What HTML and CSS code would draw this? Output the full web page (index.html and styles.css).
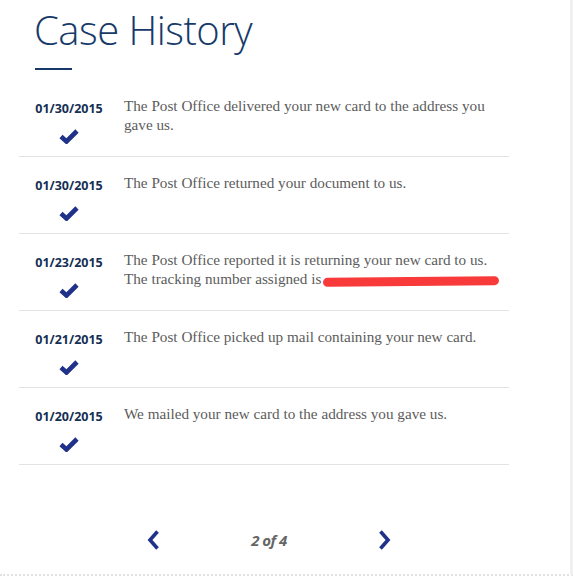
FILE: index.html
```html
<!DOCTYPE html>
<html>
<head>
<meta charset="utf-8">
<link rel="stylesheet" href="styles.css">
</head>
<body>
<div class="page">
  <div class="content">
    <h1 class="title">Case History</h1>
    <div class="rule"></div>
    <ul class="history">
      <li class="item">
        <div class="when"><span class="date">01/30/2015</span>
          <svg class="check" viewBox="0 0 20 16" width="20" height="16"><path d="M2 8.5 L7.5 13.5 L18 3" /></svg></div>
        <p class="desc">The Post Office delivered your new card to the address you gave us.</p>
      </li>
      <li class="item">
        <div class="when"><span class="date">01/30/2015</span>
          <svg class="check" viewBox="0 0 20 16" width="20" height="16"><path d="M2 8.5 L7.5 13.5 L18 3" /></svg></div>
        <p class="desc">The Post Office returned your document to us.</p>
      </li>
      <li class="item">
        <div class="when"><span class="date">01/23/2015</span>
          <svg class="check" viewBox="0 0 20 16" width="20" height="16"><path d="M2 8.5 L7.5 13.5 L18 3" /></svg></div>
        <p class="desc">The Post Office reported it is returning your new card to us. The tracking number assigned is<span class="redact"></span></p>
      </li>
      <li class="item">
        <div class="when"><span class="date">01/21/2015</span>
          <svg class="check" viewBox="0 0 20 16" width="20" height="16"><path d="M2 8.5 L7.5 13.5 L18 3" /></svg></div>
        <p class="desc">The Post Office picked up mail containing your new card.</p>
      </li>
      <li class="item">
        <div class="when"><span class="date">01/20/2015</span>
          <svg class="check" viewBox="0 0 20 16" width="20" height="16"><path d="M2 8.5 L7.5 13.5 L18 3" /></svg></div>
        <p class="desc">We mailed your new card to the address you gave us.</p>
      </li>
    </ul>
    <nav class="pager">
      <svg class="chev" viewBox="0 0 14 22" width="14" height="22"><path d="M11.5 2.5 L4 11 L11.5 19.5" /></svg>
      <span class="count">2 of 4</span>
      <svg class="chev" viewBox="0 0 14 22" width="14" height="22"><path d="M2.5 2.5 L10 11 L2.5 19.5" /></svg>
    </nav>
  </div>
</div>
</body>
</html>
```
FILE: styles.css
```css
html, body { margin: 0; padding: 0; background: #fff; }
.page {
  width: 570px;
  height: 574px;
  border-right: 3px solid #f0f0f0;
  border-bottom: 2px dotted #e2e2e2;
  background: #fff;
}
.content { padding: 5px 0 0 19px; width: 490px; }
.title {
  margin: 0 0 0 15px;
  font-family: "Open Sans", sans-serif;
  font-weight: 300;
  font-size: 40px;
  line-height: 50px;
  color: #173a6a;
  letter-spacing: -0.5px;
}
.rule { margin: 13px 0 0 16px; width: 37px; height: 2px; background: #173a6a; }
.history { list-style: none; margin: 10px 0 0; padding: 0; }
.item {
  display: flex;
  height: 76px;
  border-bottom: 1px solid #e3e3e3;
}
.when {
  width: 100px;
  display: flex;
  flex-direction: column;
  align-items: center;
  padding-top: 21px;
  box-sizing: border-box;
}
.date {
  font-family: "Open Sans", sans-serif;
  font-weight: 700;
  font-size: 12.5px;
  line-height: 16px;
  color: #152f55;
}
.check { margin-top: 11px; }
.check path { fill: none; stroke: #1f3189; stroke-width: 4.6; stroke-linejoin: miter; }
.desc {
  margin: 16px 0 0 5px;
  font-family: "Liberation Serif", serif;
  font-size: 15.2px;
  line-height: 19px;
  color: #5c5c5c;
  flex: 1;
}
.redact {
  background: #f93a3a;
  border-radius: 6px;
  display: inline-block;
  height: 9px;
  width: 176px;
  margin-left: 2px;
  vertical-align: -2px;
  transform: rotate(-0.6deg);
}
.pager {
  margin-top: 64px;
  padding-left: 10px;
  display: flex;
  align-items: center;
  justify-content: center;
}
.pager .count {
  width: 218px;
  text-align: center;
  font-family: "Open Sans", sans-serif;
  font-weight: 700;
  font-style: italic;
  font-size: 15px;
  color: #666;
  letter-spacing: -0.5px;
}
.chev path { fill: none; stroke: #1f3189; stroke-width: 3.6; }
```
